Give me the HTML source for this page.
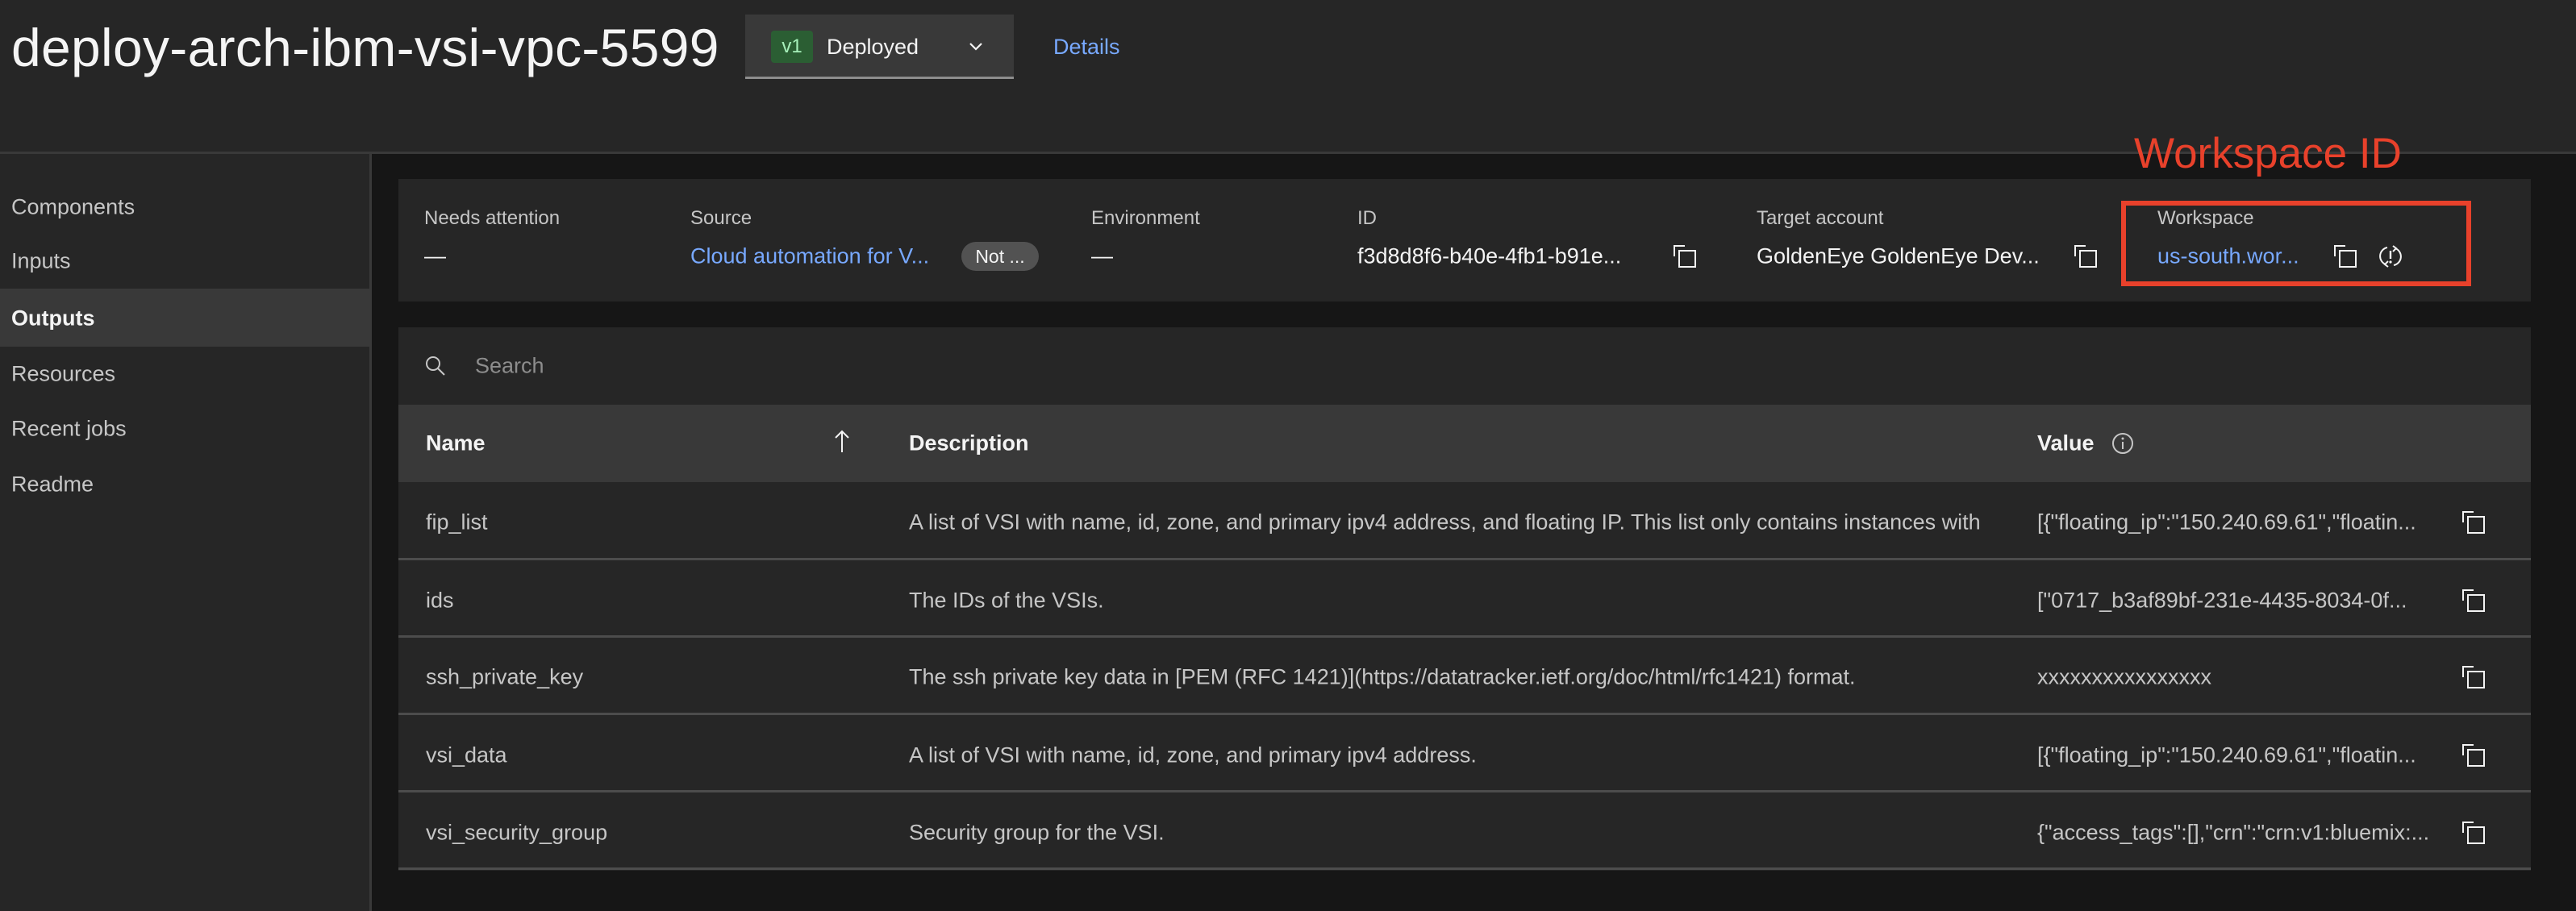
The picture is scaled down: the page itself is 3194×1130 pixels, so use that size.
<!DOCTYPE html>
<html><head><meta charset="utf-8"><style>
*{margin:0;padding:0;box-sizing:border-box}
body{width:3194px;height:1130px;background:#161616;font-family:"Liberation Sans",sans-serif;color:#f4f4f4;position:relative;overflow:hidden}
.a{position:absolute;white-space:nowrap}
.hdr{left:0;top:0;width:3194px;height:191px;background:#262626;border-bottom:3px solid #393939}
.side{left:0;top:191px;width:461px;height:939px;background:#262626;border-right:3px solid #393939}
.nav{left:14px;font-size:27px;color:#c6c6c6;transform:translateY(-50%)}
.lbl{font-size:24px;color:#c6c6c6;transform:translateY(-50%)}
.val{font-size:27px;color:#f4f4f4;transform:translateY(-50%)}
.link{color:#78a9ff}
.cell{font-size:27px;color:#c6c6c6;transform:translateY(-50%)}
.sep{left:494px;width:2644px;height:3px;background:#4c4c4c}
svg.ic{position:absolute;width:28px;height:28px}
</style></head><body>
<div class="a hdr"></div>
<div class="a" style="left:14px;top:26px;font-size:66px;line-height:66px;font-weight:300;color:#f4f4f4;letter-spacing:0.3px">deploy-arch-ibm-vsi-vpc-5599</div>
<div class="a" style="left:924px;top:18px;width:333px;height:80px;background:#393939;border-bottom:3px solid #8d8d8d"></div>
<div class="a" style="left:956px;top:38px;width:52px;height:40px;background:#2b5e33;border-radius:4px;color:#a7f0ba;font-size:24px;text-align:center;line-height:40px">v1</div>
<div class="a" style="left:1025px;top:40px;font-size:27px;line-height:36px">Deployed</div>
<svg class="ic" style="left:1196px;top:44px" viewBox="0 0 28 28"><path d="M7 10 L14 17 L21 10" fill="none" stroke="#f4f4f4" stroke-width="2.2"/></svg>
<div class="a link" style="left:1306px;top:40px;font-size:27px;line-height:36px">Details</div>

<div class="a side"></div>
<div class="a nav" style="top:257px">Components</div>
<div class="a nav" style="top:324px">Inputs</div>
<div class="a" style="left:0;top:358px;width:461px;height:72px;background:#393939"></div>
<div class="a nav" style="top:395px;color:#f4f4f4;font-weight:bold">Outputs</div>
<div class="a nav" style="top:464px">Resources</div>
<div class="a nav" style="top:532px">Recent jobs</div>
<div class="a nav" style="top:601px">Readme</div>

<div class="a" style="left:494px;top:222px;width:2644px;height:152px;background:#262626"></div>
<div class="a lbl" style="left:526px;top:271px">Needs attention</div>
<div class="a val" style="left:526px;top:318px">—</div>
<div class="a lbl" style="left:856px;top:271px">Source</div>
<div class="a val link" style="left:856px;top:318px">Cloud automation for V...</div>
<div class="a" style="left:1192px;top:300px;width:96px;height:36px;border-radius:18px;background:#525252;color:#f4f4f4;font-size:23px;text-align:center;line-height:36px">Not ...</div>
<div class="a lbl" style="left:1353px;top:271px">Environment</div>
<div class="a val" style="left:1353px;top:318px">—</div>
<div class="a lbl" style="left:1683px;top:271px">ID</div>
<div class="a val" style="left:1683px;top:318px">f3d8d8f6-b40e-4fb1-b91e...</div>
<div class="a lbl" style="left:2178px;top:271px">Target account</div>
<div class="a val" style="left:2178px;top:318px">GoldenEye GoldenEye Dev...</div>
<div class="a lbl" style="left:2675px;top:271px">Workspace</div>
<div class="a val link" style="left:2675px;top:318px">us-south.wor...</div>
<div class="a" style="left:2630px;top:249px;width:434px;height:106px;border:6px solid #e8412b"></div>
<div class="a" style="left:2646px;top:160px;font-size:53px;color:#e8412b;line-height:62px">Workspace ID</div>

<svg width="0" height="0" style="position:absolute"><defs><symbol id="cp" viewBox="0 0 28 28"><path d="M1 14 V1 H14" fill="none" stroke="#f4f4f4" stroke-width="2"/><rect x="7" y="7" width="20" height="20" fill="none" stroke="#f4f4f4" stroke-width="2"/></symbol></defs></svg>
<svg class="ic" style="left:2075px;top:304px"><use href="#cp"/></svg>
<svg class="ic" style="left:2572px;top:304px"><use href="#cp"/></svg>
<svg class="ic" style="left:2894px;top:304px"><use href="#cp"/></svg>
<svg class="ic" style="left:2950px;top:304px" viewBox="0 0 28 28"><path d="M10 3 A11 11 0 0 0 8 24" fill="none" stroke="#f4f4f4" stroke-width="2"/><path d="M18 25 A11 11 0 0 0 20 4" fill="none" stroke="#f4f4f4" stroke-width="2"/><path d="M17 1 L21 4 L17 8" fill="none" stroke="#f4f4f4" stroke-width="2"/><path d="M11 27 L7 24 L11 20" fill="none" stroke="#f4f4f4" stroke-width="2"/><path d="M14 7 V17" stroke="#f4f4f4" stroke-width="2.4"/><circle cx="14" cy="21" r="1.6" fill="#f4f4f4"/></svg>

<div class="a" style="left:494px;top:406px;width:2644px;height:96px;background:#262626"></div>
<svg class="ic" style="left:526px;top:440px" viewBox="0 0 28 28"><circle cx="11" cy="11" r="8" fill="none" stroke="#c6c6c6" stroke-width="2"/><path d="M17 17 L25 25" stroke="#c6c6c6" stroke-width="2"/></svg>
<div class="a" style="left:589px;top:454px;font-size:27px;color:#8d8d8d;transform:translateY(-50%)">Search</div>
<div class="a" style="left:494px;top:502px;width:2644px;height:96px;background:#393939"></div>
<div class="a val" style="left:528px;top:550px;font-weight:bold">Name</div>
<svg class="ic" style="left:1030px;top:533px" viewBox="0 0 28 28"><path d="M14 2 V28 M6 10 L14 2 L22 10" fill="none" stroke="#f4f4f4" stroke-width="2"/></svg>
<div class="a val" style="left:1127px;top:550px;font-weight:bold">Description</div>
<div class="a val" style="left:2526px;top:550px;font-weight:bold">Value</div>
<svg class="ic" style="left:2618px;top:536px" viewBox="0 0 28 28"><circle cx="14" cy="14" r="12" fill="none" stroke="#c6c6c6" stroke-width="2"/><path d="M14 12 V21" stroke="#c6c6c6" stroke-width="2"/><circle cx="14" cy="8" r="1.5" fill="#c6c6c6"/></svg>

<div class="a" style="left:494px;top:598px;width:2644px;height:482px;background:#262626"></div>
<div class="a sep" style="top:692px"></div>
<div class="a sep" style="top:788px"></div>
<div class="a sep" style="top:884px"></div>
<div class="a sep" style="top:980px"></div>
<div class="a sep" style="top:1076px"></div>

<div class="a cell" style="left:528px;top:648px">fip_list</div>
<div class="a cell" style="left:1127px;top:648px;width:1336px;overflow:hidden">A list of VSI with name, id, zone, and primary ipv4 address, and floating IP. This list only contains instances with a floating IP</div>
<div class="a cell" style="left:2526px;top:648px">[{"floating_ip":"150.240.69.61","floatin...</div>
<div class="a cell" style="left:528px;top:745px">ids</div>
<div class="a cell" style="left:1127px;top:745px">The IDs of the VSIs.</div>
<div class="a cell" style="left:2526px;top:745px">["0717_b3af89bf-231e-4435-8034-0f...</div>
<div class="a cell" style="left:528px;top:840px">ssh_private_key</div>
<div class="a cell" style="left:1127px;top:840px">The ssh private key data in [PEM (RFC 1421)](https://datatracker.ietf.org/doc/html/rfc1421) format.</div>
<div class="a cell" style="left:2526px;top:840px">xxxxxxxxxxxxxxxx</div>
<div class="a cell" style="left:528px;top:937px">vsi_data</div>
<div class="a cell" style="left:1127px;top:937px">A list of VSI with name, id, zone, and primary ipv4 address.</div>
<div class="a cell" style="left:2526px;top:937px">[{"floating_ip":"150.240.69.61","floatin...</div>
<div class="a cell" style="left:528px;top:1033px">vsi_security_group</div>
<div class="a cell" style="left:1127px;top:1033px">Security group for the VSI.</div>
<div class="a cell" style="left:2526px;top:1033px">{"access_tags":[],"crn":"crn:v1:bluemix:...</div>

<svg class="ic" style="left:3053px;top:634px"><use href="#cp"/></svg>
<svg class="ic" style="left:3053px;top:731px"><use href="#cp"/></svg>
<svg class="ic" style="left:3053px;top:826px"><use href="#cp"/></svg>
<svg class="ic" style="left:3053px;top:923px"><use href="#cp"/></svg>
<svg class="ic" style="left:3053px;top:1019px"><use href="#cp"/></svg>
</body></html>
